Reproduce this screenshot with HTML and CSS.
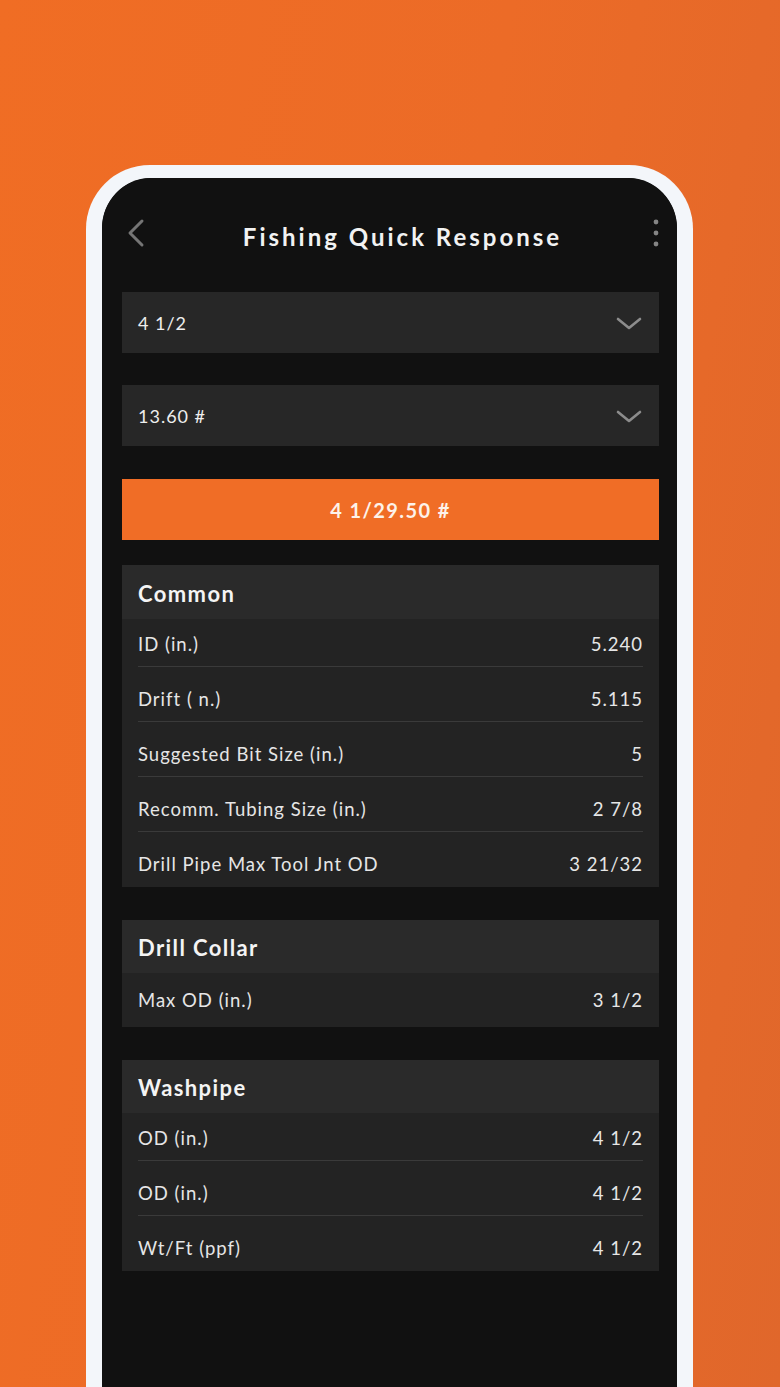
FILE: index.html
```html
<!DOCTYPE html>
<html>
<head>
<meta charset="utf-8">
<link rel="stylesheet" href="styles.css">
</head>
<body>
<div class="phone">
  <div class="screen">
    <div class="header">
      <svg class="back" width="24" height="32" viewBox="0 0 24 32"><path d="M18 4 L6 16 L18 28" fill="none" stroke="#757575" stroke-width="3" stroke-linecap="round" stroke-linejoin="round"/></svg>
      <div class="title">Fishing Quick Response</div>
      <svg class="more" width="10" height="30" viewBox="0 0 10 30"><circle cx="5" cy="4" r="2.4" fill="#858585"/><circle cx="5" cy="15" r="2.4" fill="#858585"/><circle cx="5" cy="26" r="2.4" fill="#858585"/></svg>
    </div>
    <div class="content">
      <div class="select"><span>4 1/2</span><svg width="26" height="14" viewBox="0 0 26 14"><path d="M2 2 L13 11 L24 2" fill="none" stroke="#8c8c8c" stroke-width="2.6" stroke-linecap="round" stroke-linejoin="round"/></svg></div>
      <div class="select"><span>13.60 #</span><svg width="26" height="14" viewBox="0 0 26 14"><path d="M2 2 L13 11 L24 2" fill="none" stroke="#8c8c8c" stroke-width="2.6" stroke-linecap="round" stroke-linejoin="round"/></svg></div>
      <div class="result">4 1/29.50 #</div>

      <div class="card card-common">
        <div class="card-head">Common</div>
        <div class="row first"><span>ID (in.)</span><span>5.240</span></div>
        <div class="row"><span>Drift ( n.)</span><span>5.115</span></div>
        <div class="row"><span>Suggested Bit Size (in.)</span><span>5</span></div>
        <div class="row"><span>Recomm. Tubing Size (in.)</span><span>2 7/8</span></div>
        <div class="row last"><span>Drill Pipe Max Tool Jnt OD</span><span>3 21/32</span></div>
      </div>

      <div class="card card-collar">
        <div class="card-head">Drill Collar</div>
        <div class="row single"><span>Max OD (in.)</span><span>3 1/2</span></div>
      </div>

      <div class="card card-wash">
        <div class="card-head">Washpipe</div>
        <div class="row first"><span>OD (in.)</span><span>4 1/2</span></div>
        <div class="row"><span>OD (in.)</span><span>4 1/2</span></div>
        <div class="row last"><span>Wt/Ft (ppf)</span><span>4 1/2</span></div>
      </div>
    </div>
  </div>
</div>
</body>
</html>
```
FILE: styles.css
```css
html, body {
  margin: 0;
  padding: 0;
}
body {
  width: 780px;
  height: 1387px;
  overflow: hidden;
  background: linear-gradient(100deg, #f06d24 0%, #ec6b27 50%, #e0672b 100%);
  font-family: "Lato", "Open Sans", sans-serif;
  color: #ececec;
}
.phone {
  margin: 165px 0 0 86px;
  width: 575px;
  height: 1209px;
  border: 16px solid #f3f6fa;
  border-top-width: 13px;
  border-bottom: none;
  border-radius: 64px 64px 0 0;
  background: #111111;
}
.screen {
  height: 100%;
  border-radius: 50px 50px 0 0;
  background: #111111;
  overflow: hidden;
}
.header {
  height: 114px;
  display: grid;
  grid-template-columns: 1fr auto 1fr;
  align-items: center;
  padding: 0 16px 0 22px;
  box-sizing: border-box;
}
.back {
  margin-top: -4px;
}
.title {
  font-size: 24px;
  font-weight: 700;
  color: #f2f2f2;
  letter-spacing: 3px;
  margin-top: 2px;
  margin-left: 20px;
}
.more {
  margin-top: -4px;
  justify-self: end;
}
.content {
  padding: 0 18px 0 20px;
  display: flex;
  flex-direction: column;
}
.select {
  height: 61px;
  background: #272727;
  display: flex;
  align-items: center;
  justify-content: space-between;
  padding: 0 17px 0 16px;
  font-size: 18px;
  color: #eeeeee;
  letter-spacing: 1px;
  margin-bottom: 32px;
}
.select + .select {
  margin-bottom: 33px;
}
.select svg {
  margin-top: 2px;
}
.result {
  height: 61px;
  background: #f06d26;
  color: #fdf2ea;
  font-size: 20px;
  font-weight: 700;
  display: flex;
  align-items: center;
  justify-content: center;
  letter-spacing: 1.4px;
  margin-bottom: 25px;
}
.card {
  background: #232323;
  margin-bottom: 33px;
}
.card-head {
  height: 54px;
  background: #2a2a2a;
  display: flex;
  align-items: center;
  padding: 0 16px;
  font-size: 22px;
  font-weight: 700;
  color: #f4f4f4;
  letter-spacing: 1.4px;
  padding-top: 2px;
  box-sizing: border-box;
}
.card-collar .card-head,
.card-wash .card-head {
  height: 53px;
}
.row {
  margin: 0 16px;
  display: flex;
  justify-content: space-between;
  align-items: center;
  height: 20px;
  padding: 22px 0 12px;
  border-bottom: 1px solid #3a3a3a;
  font-size: 18.5px;
  color: #e6e6e6;
  letter-spacing: 1px;
}
.row.first {
  padding-top: 15px;
}
.row.last {
  border-bottom: none;
  padding-bottom: 13px;
}
.row.single {
  border-bottom: none;
  padding: 17px 0 17px;
}
```
